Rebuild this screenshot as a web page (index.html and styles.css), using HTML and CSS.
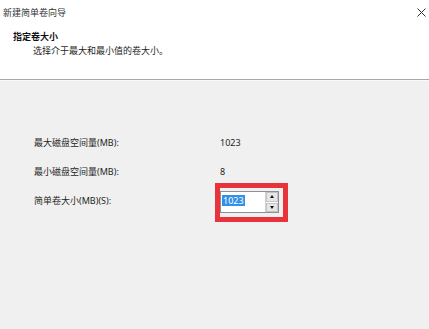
FILE: index.html
```html
<!DOCTYPE html>
<html lang="zh-CN">
<head>
    <meta charset="UTF-8">
    <meta name="viewport" content="width=device-width, initial-scale=1.0">
    <title>新建简单卷向导</title>
    <link rel="stylesheet" href="styles.css">
</head>
<body>
    <div class="wizard">
        <div class="titlebar">
            <span class="title">新建简单卷向导</span>
            <svg class="close" width="9" height="9" viewBox="0 0 9 9">
                <path d="M0.5 0.5 L8.5 8.5 M8.5 0.5 L0.5 8.5" stroke="#333" stroke-width="1" fill="none"/>
            </svg>
        </div>

        <div class="header">
            <div class="header-title">指定卷大小</div>
            <div class="header-sub">选择介于最大和最小值的卷大小。</div>
        </div>

        <div class="content">
            <div class="row">
                <span class="label">最大磁盘空间量(MB):</span>
                <span class="value">1023</span>
            </div>
            <div class="row">
                <span class="label">最小磁盘空间量(MB):</span>
                <span class="value">8</span>
            </div>
            <div class="row">
                <span class="label">简单卷大小(MB)(S):</span>
                <div class="spin">
                    <div class="spin-text"><span class="selected">1023</span></div>
                    <div class="spin-buttons">
                        <div class="spin-btn"><span class="arrow-up"></span></div>
                        <div class="spin-btn"><span class="arrow-down"></span></div>
                    </div>
                </div>
            </div>
        </div>
    </div>
</body>
</html>
```

FILE: styles.css
```css
html, body {
    height: 100%;
    margin: 0;
}

body {
    font-family: "Noto Sans", "Noto Sans CJK SC", sans-serif;
    font-size: 9px;
    color: #1e1e1e;
    background: #f0f0f0;
}

.wizard {
    height: 100%;
    display: flex;
    flex-direction: column;
}

.titlebar {
    height: 24px;
    display: flex;
    align-items: center;
    justify-content: space-between;
    padding: 0 3px 0 3px;
    background: #fff;
    color: #333;
}

.header {
    height: 56px;
    box-sizing: border-box;
    padding-top: 6px;
    background: #fff;
    border-bottom: 1px solid #a8a8a8;
    box-shadow: 0 1px 0 #fafafa;
}

.header-title {
    padding-left: 13px;
    font-weight: bold;
    line-height: 14px;
    color: #111;
}

.header-sub {
    padding-left: 33px;
    line-height: 14px;
}

.content {
    flex: 1;
    padding: 48px 0 0 34px;
}

.row {
    display: grid;
    grid-template-columns: 186px auto;
    align-items: center;
    height: 29px;
}

.label,
.value {
    line-height: 14px;
}

.spin {
    position: relative;
    display: flex;
    width: 59px;
    height: 22px;
    margin-top: 3px;
    box-sizing: border-box;
    border: 1px solid #8f8f8f;
    background: #fff;
}

/* red annotation frame drawn over the control */
.spin::after {
    content: "";
    position: absolute;
    top: -9px;
    right: -10px;
    bottom: -10px;
    left: -6px;
    border: 5px solid #e8333a;
}

.spin-text {
    flex: 1;
    padding: 2px 0 0 1px;
}

.selected {
    display: inline-block;
    background: #3390ea;
    color: #fff;
    line-height: 11px;
    padding: 0 1px;
}

.spin-buttons {
    width: 12px;
    display: flex;
    flex-direction: column;
    gap: 1px;
    background: #fff;
    border-left: 1px solid #d0d0d0;
}

.spin-btn {
    flex: 1;
    display: flex;
    align-items: center;
    justify-content: center;
    background: #e6e6e6;
    border: 1px solid #c4c4c4;
}

.arrow-up {
    border-left: 2px solid transparent;
    border-right: 2px solid transparent;
    border-bottom: 3px solid #111;
}

.arrow-down {
    border-left: 2px solid transparent;
    border-right: 2px solid transparent;
    border-top: 3px solid #111;
}
```
